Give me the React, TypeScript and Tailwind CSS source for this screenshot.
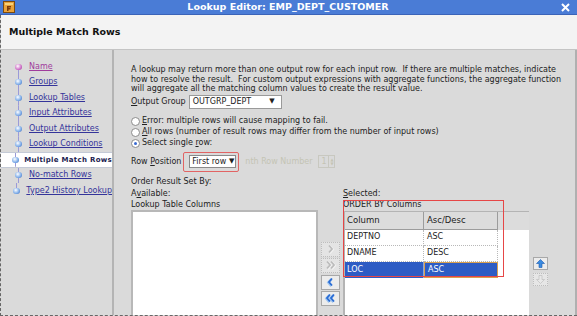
import { FC, ReactNode } from "react";

const navItems = [
  { label: "Name", visited: true },
  { label: "Groups" },
  { label: "Lookup Tables" },
  { label: "Input Attributes" },
  { label: "Output Attributes" },
  { label: "Lookup Conditions" },
  { label: "Multiple Match Rows", current: true },
  { label: "No-match Rows" },
  { label: "Type2 History Lookup" },
];

const U: FC<{ children: ReactNode }> = ({ children }) => (
  <span className="underline underline-offset-1">{children}</span>
);

const TitleBar = () => (
  <div className="h-[15px] shrink-0 flex items-center bg-[#4a7cd6] border-b border-[#3a63b8] px-[3px]">
    <svg width="12" height="12" viewBox="0 0 12 12">
      <rect x="0.5" y="0.5" width="11" height="11" fill="#e9a23a" stroke="#7a4a10" />
      <rect x="2" y="2" width="8" height="2" fill="#f7d27a" />
      <path d="M4 5h4v1.5H5.5V7H7.5v1.5H5.5V10H4z" fill="#7a3a08" />
    </svg>
    <div className="flex-1 text-center text-white font-bold text-[9.5px] leading-none">
      Lookup Editor: EMP_DEPT_CUSTOMER
    </div>
    <svg width="9" height="9" viewBox="0 0 9 9" className="mr-[4px]">
      <path d="M1 1l7 7M8 1L1 8" stroke="#fff" strokeWidth="2" />
    </svg>
  </div>
);

const Bullet: FC<{ visited?: boolean }> = ({ visited }) => (
  <span
    className={
      visited
        ? "w-[7px] h-[6px] rounded-full bg-[radial-gradient(circle_at_40%_35%,#fff,#d070c8_60%,#903a90)]"
        : "w-[7px] h-[6px] rounded-full bg-[radial-gradient(circle_at_40%_35%,#fff,#7aaae8_60%,#3a60b0)]"
    }
  />
);

const Nav = () => (
  <div className="w-[113px] shrink-0 border-r-2 border-[#b4b4b4] pt-[9px]">
    {navItems.map((item, i) => (
      <div
        key={item.label}
        className={
          item.current
            ? "h-[15.5px] flex items-center bg-white border-y border-[#c4cad6] pl-[11px]"
            : "h-[15.5px] flex items-center pl-[11px]"
        }
      >
        <div
          className={
            i === 0
              ? "w-[12px] h-full flex items-center justify-center bg-[linear-gradient(#9a9ad8,#9a9ad8)] bg-no-repeat bg-bottom bg-[length:1px_50%]"
              : i === navItems.length - 1
              ? "w-[12px] h-full flex items-center justify-center bg-[linear-gradient(#9a9ad8,#9a9ad8)] bg-no-repeat bg-top bg-[length:1px_50%]"
              : "w-[12px] h-full flex items-center justify-center bg-[linear-gradient(#9a9ad8,#9a9ad8)] bg-no-repeat bg-center bg-[length:1px_100%]"
          }
        >
          <Bullet visited={item.visited} />
        </div>
        {item.current ? (
          <span className="ml-[5px] font-bold text-[7px] text-[#1c1c50] whitespace-nowrap tracking-[0.3px]">
            {item.label}
          </span>
        ) : (
          <span
            className={
              item.visited
                ? "ml-[5px] text-[#a03c9c] underline whitespace-nowrap"
                : "ml-[5px] text-[#34349a] underline whitespace-nowrap"
            }
          >
            {item.label}
          </span>
        )}
      </div>
    ))}
  </div>
);

const Radio: FC<{ checked?: boolean; children: ReactNode }> = ({ checked, children }) => (
  <div className="h-[11px] flex items-center">
    <span className="w-[9px] h-[9px] rounded-full border border-[#8c8c8c] bg-white flex items-center justify-center">
      {checked && <span className="w-[3px] h-[3px] rounded-full bg-[#3a6ad0]" />}
    </span>
    <span className="ml-[2px] whitespace-nowrap">{children}</span>
  </div>
);

// chevron paths for the move buttons
const single = "M7 2.5L10 6L7 9.5";
const double = "M5 2.5L8 6L5 9.5M9 2.5L12 6L9 9.5";

const MoveButton: FC<{ d: string; active?: boolean; flip?: boolean }> = ({ d, active, flip }) => (
  <div
    className={
      active
        ? "w-[19px] h-[15px] border border-[#a8a8a8] bg-[#ececec] flex items-center justify-center"
        : "w-[19px] h-[15px] border border-dotted border-[#bdbdbd] bg-[#e4e4e4] flex items-center justify-center"
    }
  >
    <svg width="17" height="12" viewBox="0 0 17 12" className={flip ? "-scale-x-100" : ""}>
      <path d={d} fill="none" stroke={active ? "#9ec4f0" : "#f2f2f2"} strokeWidth="2.6" transform="translate(0.6 0.6)" />
      <path d={d} fill="none" stroke={active ? "#2a6cd4" : "#bcbcbc"} strokeWidth="1.8" />
    </svg>
  </div>
);

const rows = [
  { col: "DEPTNO", dir: "ASC" },
  { col: "DNAME", dir: "DESC" },
  { col: "LOC", dir: "ASC", selected: true },
];

const Content = () => (
  <div className="flex-1 flex flex-col border-r-2 border-[#b0b0b0] pl-[17px] pt-[15px] min-w-0">
    <p className="leading-[9.5px] whitespace-nowrap">
      A lookup may return more than one output row for each input row.&nbsp; If there are multiple matches, indicate
      <br />
      how to resolve the result.&nbsp; For custom output expressions with aggregate functions, the aggregate function
      <br />
      will aggregate all the matching column values to create the result value.
    </p>

    <div className="mt-[1px] h-[14px] flex items-center">
      <span className="whitespace-nowrap">
        <U>O</U>utput Group
      </span>
      <div className="ml-[3px] w-[93px] h-[14px] bg-white border border-[#9a9a9a] flex items-center justify-between pl-[3px] pr-[6px]">
        <span>OUTGRP_DEPT</span>
        <span className="text-[7px]">▼</span>
      </div>
    </div>

    <div className="mt-[7px]">
      <Radio>
        <U>E</U>rror: multiple rows will cause mapping to fail.
      </Radio>
      <Radio>
        <U>A</U>ll rows (number of result rows may differ from the number of input rows)
      </Radio>
      <Radio checked>
        Select single <U>r</U>ow:
      </Radio>
    </div>

    <div className="mt-[3px] h-[20px] flex items-center">
      <span className="whitespace-nowrap">
        Row <U>P</U>osition
      </span>
      <div className="ml-[2px] h-[20px] w-[56px] border-[1.5px] border-[#e26464] rounded-[2px] flex items-center pl-[5px]">
        <div className="w-[47px] h-[13px] bg-white border border-[#8a8a8a] flex items-center justify-between pl-[2px] pr-[1px]">
          <span className="whitespace-nowrap">First row</span>
          <span className="text-[7px]">▼</span>
        </div>
      </div>
      <span className="ml-[6px] text-[#c4c4b4] whitespace-nowrap">nth Row Number</span>
      <div className="ml-[6px] w-[17px] h-[13px] border border-[#c8c8c0] flex items-center">
        <span className="flex-1 text-center text-[#c4c4b4]">1</span>
        <span className="w-[6px] h-full border-l border-[#c8c8c0] flex flex-col text-[4px] text-[#c4c4b4] leading-none items-center justify-center">
          <span>▲</span>
          <span>▼</span>
        </span>
      </div>
    </div>

    <div className="mt-[5px] h-[10px] flex items-center">Order Result Set By:</div>

    <div className="mt-[1px] flex-1 flex min-h-0">
      <div className="w-[187px] shrink-0 flex flex-col">
        <div className="h-[12px] flex items-center">
          A<U>v</U>ailable:
        </div>
        <div className="h-[10px] flex items-center">Lookup Table Columns</div>
        <div className="flex-1 bg-white border-2 border-b-0 border-[#b8b8b8]" />
      </div>

      <div className="ml-[3px] w-[19px] shrink-0 pt-[54px] flex flex-col">
        <MoveButton d={single} />
        <div className="mt-[1px]">
          <MoveButton d={double} />
        </div>
        <div className="mt-[2px]">
          <MoveButton d={single} active flip />
        </div>
        <div className="mt-[1px]">
          <MoveButton d={double} active flip />
        </div>
      </div>

      <div className="ml-[3px] w-[186px] shrink-0 flex flex-col relative">
        <div className="h-[12px] flex items-center">
          <U>S</U>elected:
        </div>
        <div className="h-[11px] flex items-center">ORDER BY Columns</div>
        <div className="flex-1 flex flex-col border-l-2 border-t border-[#b4b4b4]">
          <div className="h-[18px] flex bg-[#dcdcdc]">
            <div className="w-[79px] border-r border-b border-[#9c9c9c] flex items-center pl-[2px] text-[8.5px]">
              Column
            </div>
            <div className="w-[74px] border-r border-b border-[#9c9c9c] flex items-center pl-[3px] text-[8.5px]">
              Asc/Desc
            </div>
          </div>
          <div className="flex-1 bg-white">
            {rows.map((r) =>
              r.selected ? (
                <div key={r.col} className="h-[16px] flex text-white">
                  <div className="w-[79px] bg-[#2d5cc4] border-r border-[#8ea6d8] flex items-center pl-[2px]">
                    {r.col}
                  </div>
                  <div className="w-[74px] bg-[#2d5cc4] border border-[#d8a050] flex items-center pl-[3px]">
                    {r.dir}
                  </div>
                </div>
              ) : (
                <div key={r.col} className="h-[16px] flex">
                  <div className="w-[79px] border-r border-b border-dotted border-[#b8b8b8] flex items-center pl-[2px]">
                    {r.col}
                  </div>
                  <div className="w-[74px] border-r border-b border-dotted border-[#b8b8b8] flex items-center pl-[3px]">
                    {r.dir}
                  </div>
                </div>
              )
            )}
          </div>
        </div>
        <div className="absolute left-0 top-[12px] w-[161px] h-[77px] border-[1.5px] border-[#e64646] pointer-events-none" />
      </div>

      <div className="ml-[4px] w-[15px] shrink-0 pt-[69px] flex flex-col">
        <div className="w-[15px] h-[13px] border border-[#a8a8a8] bg-[#ececec] flex items-center justify-center">
          <svg width="9" height="9" viewBox="0 0 9 9">
            <path d="M4.5 0.5L8.5 4.5H6V8.5H3V4.5H0.5z" fill="#3a8ae0" stroke="#1d5cb0" strokeWidth="0.6" />
          </svg>
        </div>
        <div className="mt-[3px] w-[15px] h-[13px] border border-dotted border-[#bdbdbd] bg-[#e6e6e6] flex items-center justify-center">
          <svg width="9" height="9" viewBox="0 0 9 9">
            <path d="M4.5 8.5L8.5 4.5H6V0.5H3V4.5H0.5z" fill="#e8e8e8" stroke="#b8b8b8" strokeWidth="0.6" />
          </svg>
        </div>
      </div>
    </div>
  </div>
);

const App = () => {
  return (
    <div className="w-[577px] h-[316px] overflow-hidden bg-[#dadada] font-['DejaVu_Sans',sans-serif] text-[8px] text-[#222] flex flex-col">
      <TitleBar />
      <div className="flex-1 flex flex-col border-l border-b border-dashed border-[#666] min-h-0">
        <div className="h-[35px] shrink-0 bg-[#f3f3f3] border-b border-[#c4c4c4] flex items-center pl-[8px] text-[9.5px] font-bold text-[#111]">
          Multiple Match Rows
        </div>
        <div className="flex-1 flex min-h-0">
          <Nav />
          <Content />
        </div>
      </div>
    </div>
  );
};

export default App;
